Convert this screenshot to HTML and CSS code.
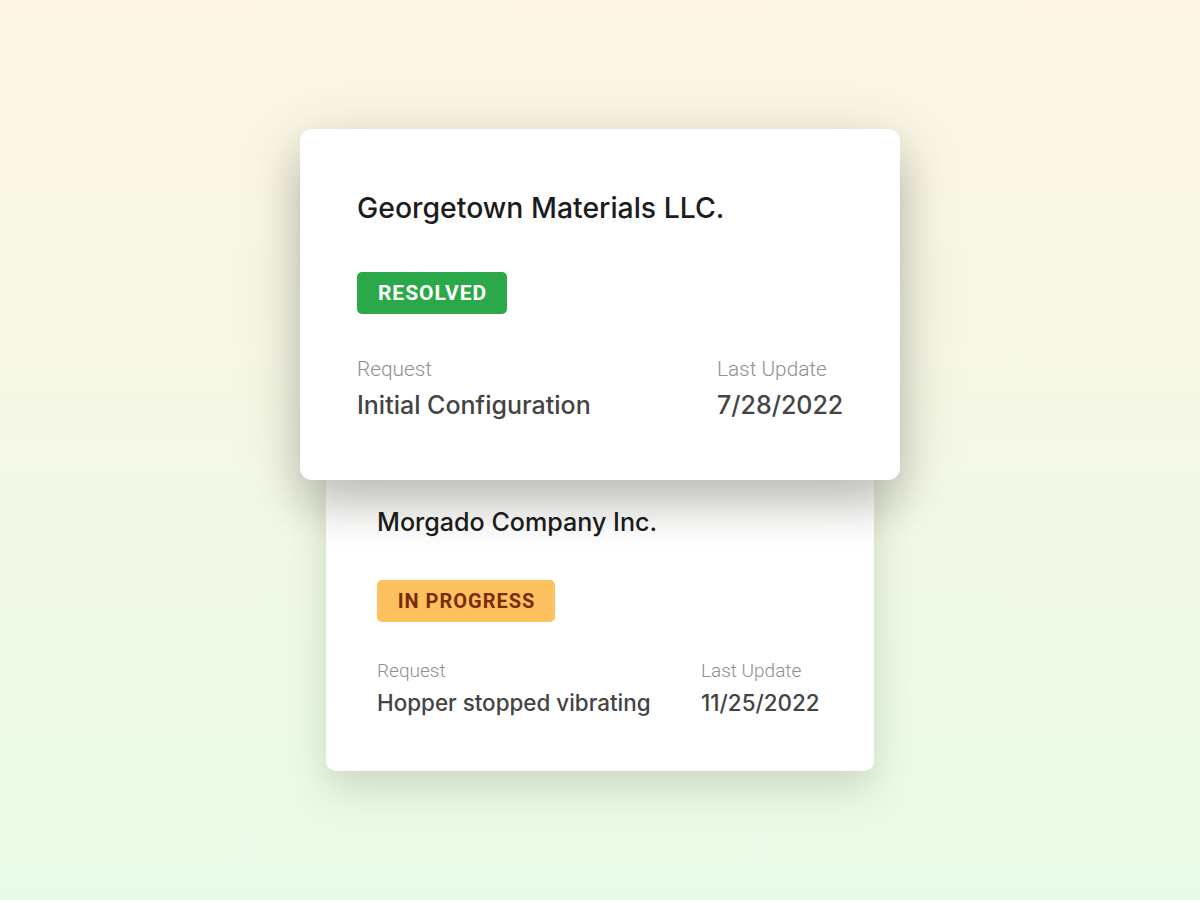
FILE: index.html
```html
<!DOCTYPE html>
<html>
<head lang="en">
    <meta charset="UTF-8">
    <title>requests</title>
    <link rel="stylesheet" href="styles.css">
</head>
<body>
<div class="stack">
    <div class="card card-front">
        <div class="card-title">Georgetown Materials LLC.</div>
        <span class="badge badge-resolved">RESOLVED</span>
        <div class="card-info">
            <div class="info-label">Request</div>
            <div class="info-label">Last Update</div>
            <div class="info-value">Initial Configuration</div>
            <div class="info-value">7/28/2022</div>
        </div>
    </div>
    <div class="card card-back">
        <div class="card-title">Morgado Company Inc.</div>
        <span class="badge badge-progress">IN PROGRESS</span>
        <div class="card-info">
            <div class="info-label">Request</div>
            <div class="info-label">Last Update</div>
            <div class="info-value">Hopper stopped vibrating</div>
            <div class="info-value">11/25/2022</div>
        </div>
    </div>
</div>
</body>
</html>
```

FILE: styles.css
```css
html, body{
    margin: 0;
    height: 100%;
}
body{
    background: linear-gradient(180deg, #fdf6e6 0%, #f6f8e6 45%, #e9fbe8 100%);
    font-family: Inter, "Noto Sans", sans-serif;
}
.stack{
    display: flex;
    flex-direction: column;
    align-items: center;
    padding-top: 129px;
}
.card{
    background: #fff;
    box-sizing: border-box;
}
.card-front{
    position: relative;
    z-index: 2;
    width: 600px;
    height: 351px;
    border-radius: 12px;
    padding: 63px 0 0 57px;
    box-shadow: 0 24px 44px rgba(0, 0, 0, 0.2), 0 10px 70px rgba(60, 60, 20, 0.14);
}
.card-back{
    position: relative;
    z-index: 1;
    width: 548px;
    height: 301px;
    margin-top: -10px;
    border-radius: 10px;
    padding: 37px 0 0 51px;
    box-shadow: 0 18px 40px rgba(60, 90, 50, 0.2);
}
.card-title{
    color: #1c1c1c;
    font-weight: 500;
    white-space: nowrap;
}
.card-front .card-title{
    font-size: 28.4px;
    line-height: 32px;
}
.card-back .card-title{
    font-size: 25.1px;
    line-height: 30px;
}
.badge{
    display: inline-block;
    height: 42px;
    line-height: 43px;
    border-radius: 5px;
    font-family: Roboto, "Liberation Sans", sans-serif;
    font-weight: 700;
    letter-spacing: 1px;
    text-indent: 1px;
    text-align: center;
    box-sizing: border-box;
}
.card-front .badge{
    margin-top: 48px;
}
.card-back .badge{
    margin-top: 43px;
}
.badge-resolved{
    width: 150px;
    font-size: 21px;
    background: #2aa84a;
    color: #fff;
}
.badge-progress{
    width: 178px;
    font-size: 20px;
    background: #fdc25f;
    color: #7c2a0c;
}
.card-info{
    display: grid;
    grid-template-columns: 360px auto;
}
.card-back .card-info{
    grid-template-columns: 324px auto;
    margin-top: 38px;
}
.card-front .card-info{
    margin-top: 43px;
}
.info-label{
    font-family: Roboto, "Liberation Sans", sans-serif;
    font-weight: 300;
    color: #8f8f8f;
    white-space: nowrap;
}
.card-front .info-label{
    font-size: 20.8px;
    line-height: 24px;
}
.card-back .info-label{
    font-size: 19px;
    line-height: 22px;
}
.info-value{
    color: #444;
    font-weight: 500;
    white-space: nowrap;
}
.card-front .info-value{
    font-size: 25px;
    line-height: 30px;
    margin-top: 9px;
}
.card-back .info-value{
    font-size: 22.4px;
    line-height: 28px;
    margin-top: 7px;
}
```
